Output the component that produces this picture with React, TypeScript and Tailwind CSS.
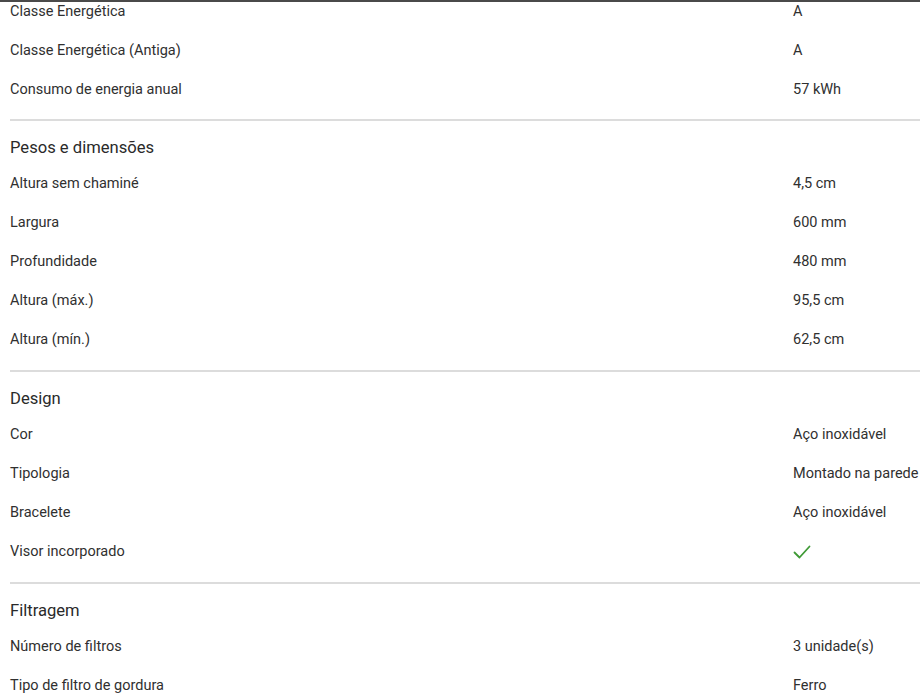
import React from "react";

type Row = { label: string; value: string | "check" };

const Check = () => (
  <svg width="18" height="14" viewBox="0 0 18 14" fill="none">
    <path d="M1.5 7.5 L6.5 12.5 L16.5 1.5" stroke="#3f9a36" strokeWidth="1.8" strokeLinecap="round" strokeLinejoin="round" />
  </svg>
);

const RowView = ({ r }: { r: Row }) => (
  <div className="flex h-[39px] items-center px-[10px] text-[14.5px] text-[#303030]">
    <div className="w-[783px] flex-none">{r.label}</div>
    <div className="whitespace-nowrap">{r.value === "check" ? <Check /> : r.value}</div>
  </div>
);

const Section = ({ title, rows, first }: { title: string; rows: Row[]; first?: boolean }) => (
  <div>
    <div className={(first ? "mt-[10px]" : "mt-[11px]") + " ml-[10px] h-[2px] bg-[#dcdcdc]"} />
    <div className="mt-[15px] h-6 px-[10px] text-[16.6px] leading-6 text-[#2a2a2a]">{title}</div>
    <div className="mt-[4px]">
      {rows.map((r, i) => (
        <RowView key={i} r={r} />
      ))}
    </div>
  </div>
);

export default function App() {
  return (
    <div
      className="h-[699px] w-[920px] overflow-hidden border-t-2 border-[#4a4a4a] bg-white"
      style={{ fontFamily: "Roboto, 'Noto Sans', sans-serif" }}
    >
      <div className="-mt-[10px]">
        {[
          { label: "Classe Energética", value: "A" },
          { label: "Classe Energética (Antiga)", value: "A" },
          { label: "Consumo de energia anual", value: "57 kWh" },
        ].map((r, i) => (
          <RowView key={i} r={r} />
        ))}
      </div>
      <Section
        first
        title="Pesos e dimensões"
        rows={[
          { label: "Altura sem chaminé", value: "4,5 cm" },
          { label: "Largura", value: "600 mm" },
          { label: "Profundidade", value: "480 mm" },
          { label: "Altura (máx.)", value: "95,5 cm" },
          { label: "Altura (mín.)", value: "62,5 cm" },
        ]}
      />
      <Section
        title="Design"
        rows={[
          { label: "Cor", value: "Aço inoxidável" },
          { label: "Tipologia", value: "Montado na parede" },
          { label: "Bracelete", value: "Aço inoxidável" },
          { label: "Visor incorporado", value: "check" },
        ]}
      />
      <Section
        title="Filtragem"
        rows={[
          { label: "Número de filtros", value: "3 unidade(s)" },
          { label: "Tipo de filtro de gordura", value: "Ferro" },
        ]}
      />
    </div>
  );
}
